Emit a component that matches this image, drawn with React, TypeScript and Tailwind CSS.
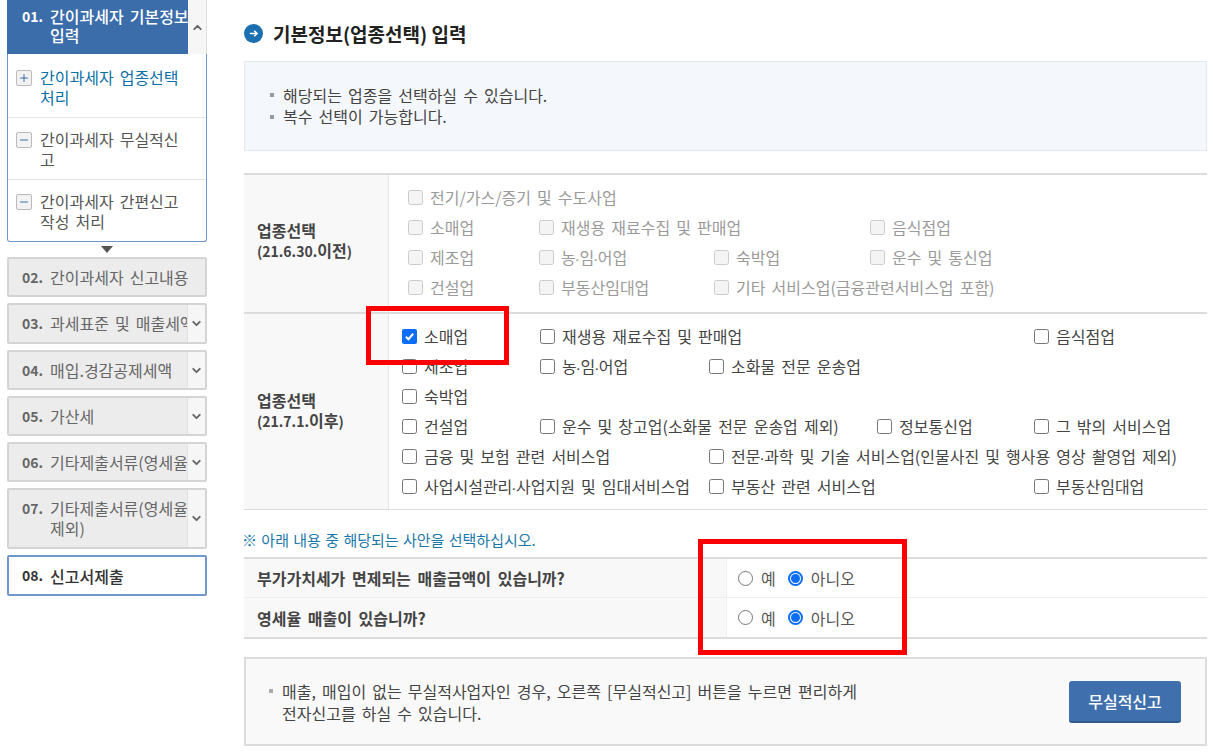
import { Fragment } from "react";
import { ChevronDown, ChevronUp, Plus, Minus } from "lucide-react";

const font = { fontFamily: '"Noto Sans CJK KR", "Noto Sans", sans-serif' };

// the middle dot is far too wide in the CJK font
function Dotted({ text }: { text: string }) {
  const parts = text.split("·");
  return (
    <>
      {parts.map((p, i) => (
        <Fragment key={i}>
          {i > 0 && <span className="font-['Liberation_Sans'] text-[11px] font-bold">·</span>}
          {p}
        </Fragment>
      ))}
    </>
  );
}

function SideItem({ no, lines, arrow = true, className = "" }: { no: string; lines: string[]; arrow?: boolean; className?: string }) {
  return (
    <div className={`flex overflow-hidden rounded-[2px] border-2 border-[#d4d4d4] bg-[#ececec] ${className}`}>
      <div className="flex min-w-0 flex-1 overflow-hidden pl-[13px] pt-[8px]">
        <b className="w-[28px] shrink-0 text-[14px] leading-[20px] font-bold text-[#666]">{no}</b>
        <div className="text-[16px] leading-[20px] whitespace-nowrap text-[#666]">
          {lines.map((l) => <div key={l}>{l}</div>)}
        </div>
      </div>
      {arrow && (
        <div className="flex w-[18px] shrink-0 items-center justify-center border-l border-[#e2e2e2] bg-[#f6f6f6]">
          <ChevronDown size={13} strokeWidth={3.5} className="text-[#666]" />
        </div>
      )}
    </div>
  );
}

function SubItem({ icon, lines, active = false, className = "" }: { icon: "plus" | "minus"; lines: string[]; active?: boolean; className?: string }) {
  return (
    <div className={`flex pl-[8px] ${className}`}>
      <div className="mt-[3px] flex h-[16px] w-[16px] shrink-0 items-center justify-center rounded-[2px] border border-[#bbb] bg-[#f2f2f2]">
        {icon === "plus" ? <Plus size={12} strokeWidth={2} className="text-[#3b6fb0]" /> : <Minus size={12} strokeWidth={2} className="text-[#3b6fb0]" />}
      </div>
      <div className={`pl-[8px] text-[16px] leading-[20px] ${active ? "text-[#0b6fa8]" : "text-[#555]"}`}>
        {lines.map((l) => <div key={l} className="whitespace-nowrap">{l}</div>)}
      </div>
    </div>
  );
}

function Check({ label, col = "", checked = false, disabled = false }: { label: string; col?: string; checked?: boolean; disabled?: boolean }) {
  return (
    <div className={`flex h-[30px] items-center whitespace-nowrap ${col}`}>
      {checked ? (
        <span className="flex h-[15px] w-[15px] items-center justify-center rounded-[2px] bg-[#0b6cf5]">
          <svg width="11" height="11" viewBox="0 0 12 12" fill="none" stroke="#fff" strokeWidth="2.2">
            <path d="M2 6.3 L4.8 9 L10 3" />
          </svg>
        </span>
      ) : (
        <span className={`h-[15px] w-[15px] rounded-[2.5px] border ${disabled ? "border-[#ccc] bg-[#f4f4f4]" : "border-[#767676] bg-white"}`} />
      )}
      <span className={`ml-[7px] text-[16px] ${disabled ? "text-[#9a9a9a]" : "text-[#444]"}`}>
        <Dotted text={label} />
      </span>
    </div>
  );
}

function Radios() {
  return (
    <div className="flex items-center pl-[11px] text-[16px] text-[#555]">
      <span className="h-[15px] w-[15px] rounded-full border border-[#767676] bg-white" />
      <span className="ml-[8px]">예</span>
      <span className="ml-[12px] flex h-[15px] w-[15px] items-center justify-center rounded-full border-2 border-[#0b6cf5] bg-white">
        <span className="h-[9px] w-[9px] rounded-full bg-[#0b6cf5]" />
      </span>
      <span className="ml-[8px]">아니오</span>
    </div>
  );
}

export default function App() {
  return (
    <div style={font} className="relative flex h-[752px] w-[1213px] overflow-hidden bg-white [word-spacing:2.5px]">
      <aside className="w-[244px] shrink-0 pl-[7px]">
        <div className="w-[200px]">
          <div className="flex h-[54px]">
            <div className="flex w-[181px] overflow-hidden bg-[#3c6dab] pt-[7px] pl-[15px] font-bold text-white">
              <span className="w-[28px] shrink-0 text-[14px] leading-[19px]">01.</span>
              <span className="text-[16px] leading-[19px] font-medium whitespace-nowrap">간이과세자 기본정보<br />입력</span>
            </div>
            <div className="flex w-[19px] items-center justify-center border-r border-[#ddd] bg-[#f6f6f6]">
              <ChevronUp size={13} strokeWidth={3.5} className="text-[#666]" />
            </div>
          </div>
          <div className="rounded-b-[3px] border border-t-0 border-[#7097cb] bg-white">
            <SubItem icon="plus" active lines={["간이과세자 업종선택", "처리"]} className="h-[64px] border-b border-[#e6e6e6] pt-[13px]" />
            <SubItem icon="minus" lines={["간이과세자 무실적신", "고"]} className="h-[62px] border-b border-[#e6e6e6] pt-[11px]" />
            <SubItem icon="minus" lines={["간이과세자 간편신고", "작성 처리"]} className="h-[61px] pt-[11px]" />
          </div>
          <div className="mx-auto mt-[4px] mb-[4px] h-0 w-0 border-x-[6px] border-t-[7px] border-x-transparent border-t-[#555]" />
          <SideItem no="02." lines={["간이과세자 신고내용"]} arrow={false} className="h-[40px]" />
          <SideItem no="03." lines={["과세표준 및 매출세액"]} className="mt-[6px] h-[41px]" />
          <SideItem no="04." lines={["매입.경감공제세액"]} className="mt-[6px] h-[40px]" />
          <SideItem no="05." lines={["가산세"]} className="mt-[6px] h-[40px]" />
          <SideItem no="06." lines={["기타제출서류(영세율 제외)"]} className="mt-[6px] h-[40px]" />
          <SideItem no="07." lines={["기타제출서류(영세율", "제외)"]} className="mt-[6px] h-[61px]" />
          <div className="mt-[6px] flex h-[41px] items-center rounded-[2px] border-2 border-[#7097cb] bg-white pl-[13px] text-[#333]">
            <b className="w-[28px] text-[14px]">08.</b>
            <span className="text-[16px] font-medium">신고서제출</span>
          </div>
        </div>
      </aside>

      <main className="w-[963px] shrink-0">
        <div className="flex h-[61px] items-center pt-[5px] [word-spacing:0]">
          <span className="flex h-[19px] w-[19px] items-center justify-center rounded-full bg-[#1c70b0]">
            <svg width="11" height="11" viewBox="0 0 12 12" fill="none" stroke="#fff" strokeWidth="1.6">
              <path d="M2 6 H10 M6.8 3 L10 6 L6.8 9" />
            </svg>
          </span>
          <h1 className="ml-[10px] text-[19px] leading-none font-bold text-[#222]">기본정보(업종선택) 입력</h1>
        </div>

        <div className="flex h-[90px] flex-col justify-center border border-[#e6e8ee] bg-[#f4f7fc] pl-[25px] text-[16px] leading-[21.5px] text-[#444]">
          <div className="flex items-center"><span className="mr-[9px] h-[4px] w-[4px] bg-[#999]" />해당되는 업종을 선택하실 수 있습니다.</div>
          <div className="flex items-center"><span className="mr-[9px] h-[4px] w-[4px] bg-[#999]" />복수 선택이 가능합니다.</div>
        </div>

        <div className="mt-[22px] flex h-[139px] border-t-2 border-[#dcdcdc]">
          <div className="flex w-[145px] shrink-0 flex-col justify-center border-r border-[#e6e6e6] bg-[#f8f8f8] pb-[6px] pl-[13px] text-[16px] leading-[20px] font-bold text-[#444]">
            <div>업종선택</div>
            <div><span className="text-[14px]">(21.6.30.</span>이전<span className="text-[14px]">)</span></div>
          </div>
          <div className="grid flex-1 grid-cols-[131px_175px_156px_1fr] content-start pt-[7px] pl-[19px]">
            <Check disabled col="col-span-4" label="전기/가스/증기 및 수도사업" />
            <Check disabled label="소매업" />
            <Check disabled col="col-span-2" label="재생용 재료수집 및 판매업" />
            <Check disabled label="음식점업" />
            <Check disabled label="제조업" />
            <Check disabled label="농·임·어업" />
            <Check disabled label="숙박업" />
            <Check disabled label="운수 및 통신업" />
            <Check disabled label="건설업" />
            <Check disabled label="부동산임대업" />
            <Check disabled col="col-span-2" label="기타 서비스업(금융관련서비스업 포함)" />
          </div>
        </div>

        <div className="flex h-[198px] border-t-2 border-b border-[#dcdcdc]">
          <div className="flex w-[145px] shrink-0 flex-col justify-center border-r border-[#e6e6e6] bg-[#f8f8f8] pb-[3px] pl-[13px] text-[16px] leading-[20px] font-bold text-[#444]">
            <div>업종선택</div>
            <div><span className="text-[14px]">(21.7.1.</span>이후<span className="text-[14px]">)</span></div>
          </div>
          <div className="grid flex-1 grid-cols-[138px_169px_168px_157px_1fr] content-start pt-[7px] pl-[13px]">
            <Check checked label="소매업" />
            <Check col="col-span-3" label="재생용 재료수집 및 판매업" />
            <Check label="음식점업" />
            <Check label="제조업" />
            <Check label="농·임·어업" />
            <Check col="col-span-3" label="소화물 전문 운송업" />
            <Check col="col-span-5" label="숙박업" />
            <Check label="건설업" />
            <Check col="col-span-2" label="운수 및 창고업(소화물 전문 운송업 제외)" />
            <Check label="정보통신업" />
            <Check label="그 밖의 서비스업" />
            <Check col="col-span-2" label="금융 및 보험 관련 서비스업" />
            <Check col="col-span-3" label="전문·과학 및 기술 서비스업(인물사진 및 행사용 영상 촬영업 제외)" />
            <Check col="col-span-2" label="사업시설관리·사업지원 및 임대서비스업" />
            <Check col="col-span-2" label="부동산 관련 서비스업" />
            <Check label="부동산임대업" />
          </div>
        </div>

        <p className="mt-[20px] ml-[-2px] h-[27px] text-[15px] leading-[20px] text-[#1a78a8] [word-spacing:1px]">※ 아래 내용 중 해당되는 사안을 선택하십시오.</p>

        <div className="border-y-2 border-[#dcdcdc] [word-spacing:3px]">
          <div className="flex h-[39px] border-b border-[#eee]">
            <div className="flex w-[482px] items-center bg-[#f8f8f8] pl-[13px] text-[16px] font-bold text-[#444]">부가가치세가 면제되는 매출금액이 있습니까?</div>
            <div className="flex flex-1 border-l border-[#eee]"><Radios /></div>
          </div>
          <div className="flex h-[39px]">
            <div className="flex w-[482px] items-center bg-[#f8f8f8] pl-[13px] text-[16px] font-bold text-[#444]">영세율 매출이 있습니까?</div>
            <div className="flex flex-1 border-l border-[#eee]"><Radios /></div>
          </div>
        </div>

        <div className="mt-[18px] flex h-[89px] items-center justify-between border-2 border-[#dcdcdc] bg-[#f9f9f9] pr-[24px] pl-[23px] text-[16px] leading-[22px] text-[#444]">
          <div className="flex">
            <span className="mt-[9px] mr-[9px] h-[4px] w-[4px] shrink-0 bg-[#aaa]" />
            <div>매출, 매입이 없는 무실적사업자인 경우, 오른쪽 [무실적신고] 버튼을 누르면 편리하게<br />전자신고를 하실 수 있습니다.</div>
          </div>
          <button className="h-[42px] w-[112px] rounded-[3px] border-b-2 border-[#325a8c] bg-[#3f70ad] text-[16px] font-medium text-white [word-spacing:0]">무실적신고</button>
        </div>
      </main>

      <div className="absolute top-[306px] left-[366px] h-[59px] w-[143px] border-[5px] border-[#ff0000]" />
      <div className="absolute top-[539px] left-[698px] h-[116px] w-[209px] border-[5px] border-[#ff0000]" />
    </div>
  );
}
